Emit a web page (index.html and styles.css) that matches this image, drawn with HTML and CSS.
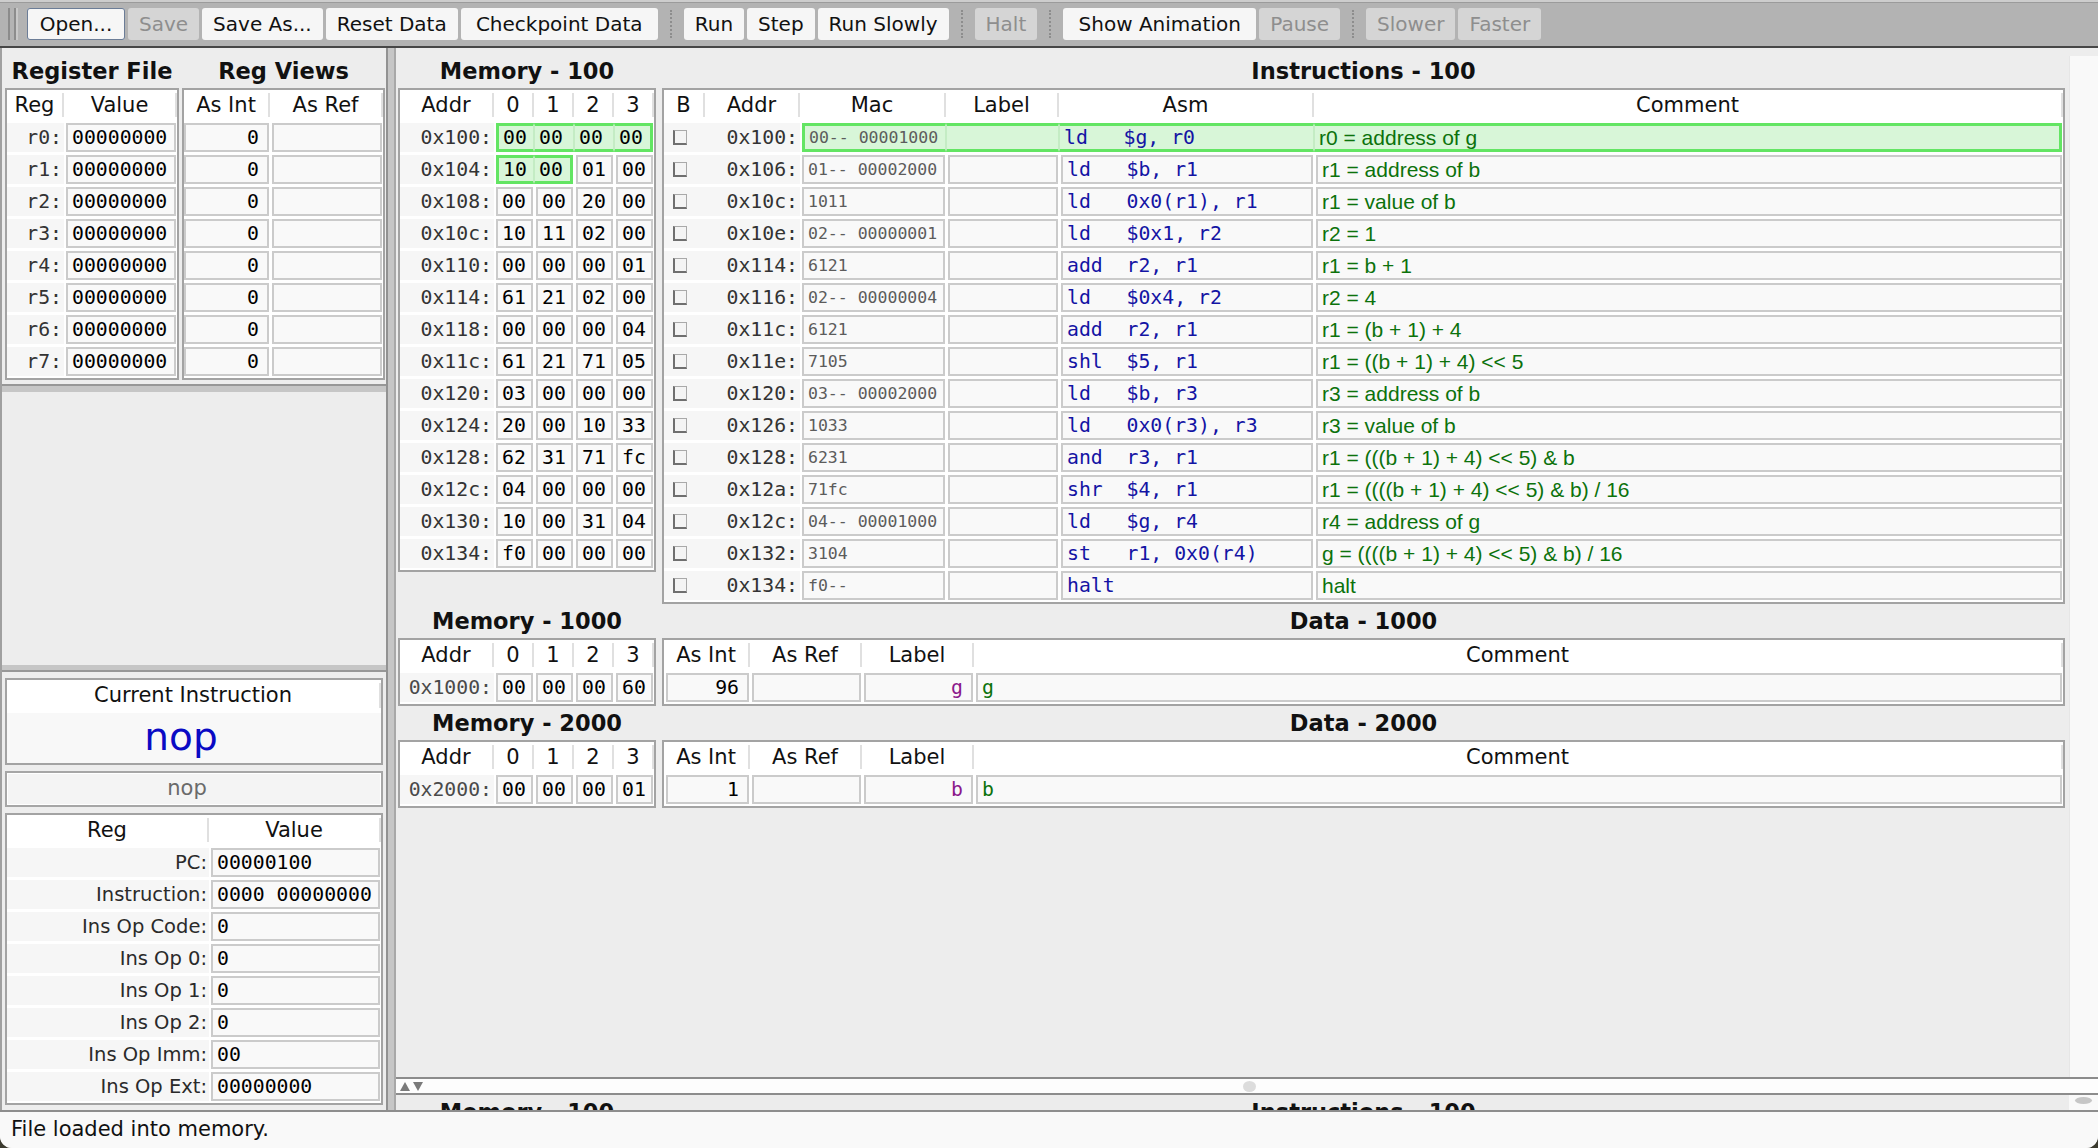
FILE: index.html
```html
<!DOCTYPE html>
<html>
<head>
<meta charset="utf-8">
<title>Simple Machine</title>
<link rel="stylesheet" href="styles.css">
</head>
<body>
<div class="app">
  <div class="toolbar">
    <span class="grip"></span>
    <button class="btn focus w-open">Open...</button>
    <button class="btn off">Save</button>
    <button class="btn">Save As...</button>
    <button class="btn">Reset Data</button>
    <button class="btn w-ckpt">Checkpoint Data</button>
    <span class="sep"></span>
    <button class="btn">Run</button>
    <button class="btn">Step</button>
    <button class="btn">Run Slowly</button>
    <span class="sep"></span>
    <button class="btn off">Halt</button>
    <span class="sep"></span>
    <button class="btn w-anim">Show Animation</button>
    <button class="btn off">Pause</button>
    <span class="sep"></span>
    <button class="btn off">Slower</button>
    <button class="btn off">Faster</button>
  </div>

  <div class="main">
    <div class="left">
      <div class="pair">
        <div class="regcol">
          <div class="title">Register File</div>
          <div class="tbl">
            <div class="thead g-reg"><div class="th">Reg</div><div class="th">Value</div></div>
            <div class="trow g-reg"><div class="lab">r0:</div><div class="fld">00000000</div></div>
            <div class="trow g-reg"><div class="lab">r1:</div><div class="fld">00000000</div></div>
            <div class="trow g-reg"><div class="lab">r2:</div><div class="fld">00000000</div></div>
            <div class="trow g-reg"><div class="lab">r3:</div><div class="fld">00000000</div></div>
            <div class="trow g-reg"><div class="lab">r4:</div><div class="fld">00000000</div></div>
            <div class="trow g-reg"><div class="lab">r5:</div><div class="fld">00000000</div></div>
            <div class="trow g-reg"><div class="lab">r6:</div><div class="fld">00000000</div></div>
            <div class="trow g-reg"><div class="lab">r7:</div><div class="fld">00000000</div></div>
          </div>
        </div>
        <div class="viewcol">
          <div class="title">Reg Views</div>
          <div class="tbl">
            <div class="thead g-view"><div class="th">As Int</div><div class="th">As Ref</div></div>
            <div class="trow g-view"><div class="fld num first0">0</div><div class="fld"></div></div>
            <div class="trow g-view"><div class="fld num first0">0</div><div class="fld"></div></div>
            <div class="trow g-view"><div class="fld num first0">0</div><div class="fld"></div></div>
            <div class="trow g-view"><div class="fld num first0">0</div><div class="fld"></div></div>
            <div class="trow g-view"><div class="fld num first0">0</div><div class="fld"></div></div>
            <div class="trow g-view"><div class="fld num first0">0</div><div class="fld"></div></div>
            <div class="trow g-view"><div class="fld num first0">0</div><div class="fld"></div></div>
            <div class="trow g-view"><div class="fld num first0">0</div><div class="fld"></div></div>
          </div>
        </div>
      </div>
      <div class="hdiv hdiv-a"></div>
      <div class="empty"></div>
      <div class="hdiv hdiv-b"></div>
      <div class="lbottom">
        <div class="tbl cur">
          <div class="thead g-one"><div class="th">Current Instruction</div></div>
          <div class="curbody">nop</div>
        </div>
        <div class="graybox"><div class="grayin">nop</div></div>
        <div class="tbl">
          <div class="thead g-cpu"><div class="th">Reg</div><div class="th">Value</div></div>
          <div class="trow g-cpu"><div class="lab sans">PC:</div><div class="fld">00000100</div></div>
          <div class="trow g-cpu"><div class="lab sans">Instruction:</div><div class="fld">0000 00000000</div></div>
          <div class="trow g-cpu"><div class="lab sans">Ins Op Code:</div><div class="fld">0</div></div>
          <div class="trow g-cpu"><div class="lab sans">Ins Op 0:</div><div class="fld">0</div></div>
          <div class="trow g-cpu"><div class="lab sans">Ins Op 1:</div><div class="fld">0</div></div>
          <div class="trow g-cpu"><div class="lab sans">Ins Op 2:</div><div class="fld">0</div></div>
          <div class="trow g-cpu"><div class="lab sans">Ins Op Imm:</div><div class="fld">00</div></div>
          <div class="trow g-cpu"><div class="lab sans">Ins Op Ext:</div><div class="fld">00000000</div></div>
        </div>
      </div>
    </div>

    <div class="vdiv"></div>

    <div class="right">
      <div class="upper">
        <div class="scroll">
          <div class="section">
            <div>
              <div class="title">Memory - 100</div>
              <div class="tbl">
                <div class="thead g-mem"><div class="th">Addr</div><div class="th">0</div><div class="th">1</div><div class="th">2</div><div class="th">3</div></div>
                <div class="trow g-mem"><div class="lab">0x100:</div><div class="fld hl hl-first">00</div><div class="fld hl">00</div><div class="fld hl">00</div><div class="fld hl hl-last">00</div></div>
                <div class="trow g-mem"><div class="lab">0x104:</div><div class="fld hl hl-first">10</div><div class="fld hl hl-last">00</div><div class="fld">01</div><div class="fld">00</div></div>
                <div class="trow g-mem"><div class="lab">0x108:</div><div class="fld">00</div><div class="fld">00</div><div class="fld">20</div><div class="fld">00</div></div>
                <div class="trow g-mem"><div class="lab">0x10c:</div><div class="fld">10</div><div class="fld">11</div><div class="fld">02</div><div class="fld">00</div></div>
                <div class="trow g-mem"><div class="lab">0x110:</div><div class="fld">00</div><div class="fld">00</div><div class="fld">00</div><div class="fld">01</div></div>
                <div class="trow g-mem"><div class="lab">0x114:</div><div class="fld">61</div><div class="fld">21</div><div class="fld">02</div><div class="fld">00</div></div>
                <div class="trow g-mem"><div class="lab">0x118:</div><div class="fld">00</div><div class="fld">00</div><div class="fld">00</div><div class="fld">04</div></div>
                <div class="trow g-mem"><div class="lab">0x11c:</div><div class="fld">61</div><div class="fld">21</div><div class="fld">71</div><div class="fld">05</div></div>
                <div class="trow g-mem"><div class="lab">0x120:</div><div class="fld">03</div><div class="fld">00</div><div class="fld">00</div><div class="fld">00</div></div>
                <div class="trow g-mem"><div class="lab">0x124:</div><div class="fld">20</div><div class="fld">00</div><div class="fld">10</div><div class="fld">33</div></div>
                <div class="trow g-mem"><div class="lab">0x128:</div><div class="fld">62</div><div class="fld">31</div><div class="fld">71</div><div class="fld">fc</div></div>
                <div class="trow g-mem"><div class="lab">0x12c:</div><div class="fld">04</div><div class="fld">00</div><div class="fld">00</div><div class="fld">00</div></div>
                <div class="trow g-mem"><div class="lab">0x130:</div><div class="fld">10</div><div class="fld">00</div><div class="fld">31</div><div class="fld">04</div></div>
                <div class="trow g-mem"><div class="lab">0x134:</div><div class="fld">f0</div><div class="fld">00</div><div class="fld">00</div><div class="fld">00</div></div>
              </div>
            </div>
            <div>
              <div class="title">Instructions - 100</div>
              <div class="tbl">
                <div class="thead g-ins"><div class="th">B</div><div class="th">Addr</div><div class="th">Mac</div><div class="th">Label</div><div class="th">Asm</div><div class="th">Comment</div></div>
                <div class="trow g-ins"><div class="lab cbc"><span class="cb"></span></div><div class="lab">0x100:</div><div class="fld mac hl hl-first">00-- 00001000</div><div class="fld hl"></div><div class="fld asm hl">ld   $g, r0</div><div class="fld cm hl hl-last">r0 = address of g</div></div>
                <div class="trow g-ins"><div class="lab cbc"><span class="cb"></span></div><div class="lab">0x106:</div><div class="fld mac">01-- 00002000</div><div class="fld"></div><div class="fld asm">ld   $b, r1</div><div class="fld cm">r1 = address of b</div></div>
                <div class="trow g-ins"><div class="lab cbc"><span class="cb"></span></div><div class="lab">0x10c:</div><div class="fld mac">1011</div><div class="fld"></div><div class="fld asm">ld   0x0(r1), r1</div><div class="fld cm">r1 = value of b</div></div>
                <div class="trow g-ins"><div class="lab cbc"><span class="cb"></span></div><div class="lab">0x10e:</div><div class="fld mac">02-- 00000001</div><div class="fld"></div><div class="fld asm">ld   $0x1, r2</div><div class="fld cm">r2 = 1</div></div>
                <div class="trow g-ins"><div class="lab cbc"><span class="cb"></span></div><div class="lab">0x114:</div><div class="fld mac">6121</div><div class="fld"></div><div class="fld asm">add  r2, r1</div><div class="fld cm">r1 = b + 1</div></div>
                <div class="trow g-ins"><div class="lab cbc"><span class="cb"></span></div><div class="lab">0x116:</div><div class="fld mac">02-- 00000004</div><div class="fld"></div><div class="fld asm">ld   $0x4, r2</div><div class="fld cm">r2 = 4</div></div>
                <div class="trow g-ins"><div class="lab cbc"><span class="cb"></span></div><div class="lab">0x11c:</div><div class="fld mac">6121</div><div class="fld"></div><div class="fld asm">add  r2, r1</div><div class="fld cm">r1 = (b + 1) + 4</div></div>
                <div class="trow g-ins"><div class="lab cbc"><span class="cb"></span></div><div class="lab">0x11e:</div><div class="fld mac">7105</div><div class="fld"></div><div class="fld asm">shl  $5, r1</div><div class="fld cm">r1 = ((b + 1) + 4) &lt;&lt; 5</div></div>
                <div class="trow g-ins"><div class="lab cbc"><span class="cb"></span></div><div class="lab">0x120:</div><div class="fld mac">03-- 00002000</div><div class="fld"></div><div class="fld asm">ld   $b, r3</div><div class="fld cm">r3 = address of b</div></div>
                <div class="trow g-ins"><div class="lab cbc"><span class="cb"></span></div><div class="lab">0x126:</div><div class="fld mac">1033</div><div class="fld"></div><div class="fld asm">ld   0x0(r3), r3</div><div class="fld cm">r3 = value of b</div></div>
                <div class="trow g-ins"><div class="lab cbc"><span class="cb"></span></div><div class="lab">0x128:</div><div class="fld mac">6231</div><div class="fld"></div><div class="fld asm">and  r3, r1</div><div class="fld cm">r1 = (((b + 1) + 4) &lt;&lt; 5) &amp; b</div></div>
                <div class="trow g-ins"><div class="lab cbc"><span class="cb"></span></div><div class="lab">0x12a:</div><div class="fld mac">71fc</div><div class="fld"></div><div class="fld asm">shr  $4, r1</div><div class="fld cm">r1 = ((((b + 1) + 4) &lt;&lt; 5) &amp; b) / 16</div></div>
                <div class="trow g-ins"><div class="lab cbc"><span class="cb"></span></div><div class="lab">0x12c:</div><div class="fld mac">04-- 00001000</div><div class="fld"></div><div class="fld asm">ld   $g, r4</div><div class="fld cm">r4 = address of g</div></div>
                <div class="trow g-ins"><div class="lab cbc"><span class="cb"></span></div><div class="lab">0x132:</div><div class="fld mac">3104</div><div class="fld"></div><div class="fld asm">st   r1, 0x0(r4)</div><div class="fld cm">g = ((((b + 1) + 4) &lt;&lt; 5) &amp; b) / 16</div></div>
                <div class="trow g-ins"><div class="lab cbc"><span class="cb"></span></div><div class="lab">0x134:</div><div class="fld mac">f0--</div><div class="fld"></div><div class="fld asm">halt</div><div class="fld cm">halt</div></div>
              </div>
            </div>
          </div>

          <div class="section">
            <div>
              <div class="title">Memory - 1000</div>
              <div class="tbl">
                <div class="thead g-mem"><div class="th">Addr</div><div class="th">0</div><div class="th">1</div><div class="th">2</div><div class="th">3</div></div>
                <div class="trow g-mem"><div class="lab gray">0x1000:</div><div class="fld">00</div><div class="fld">00</div><div class="fld">00</div><div class="fld">60</div></div>
              </div>
            </div>
            <div>
              <div class="title">Data - 1000</div>
              <div class="tbl">
                <div class="thead g-dat"><div class="th">As Int</div><div class="th">As Ref</div><div class="th">Label</div><div class="th">Comment</div></div>
                <div class="trow g-dat"><div class="fld num">96</div><div class="fld"></div><div class="fld num lbl">g</div><div class="fld dcm">g</div></div>
              </div>
            </div>
          </div>

          <div class="section">
            <div>
              <div class="title">Memory - 2000</div>
              <div class="tbl">
                <div class="thead g-mem"><div class="th">Addr</div><div class="th">0</div><div class="th">1</div><div class="th">2</div><div class="th">3</div></div>
                <div class="trow g-mem"><div class="lab gray">0x2000:</div><div class="fld">00</div><div class="fld">00</div><div class="fld">00</div><div class="fld">01</div></div>
              </div>
            </div>
            <div>
              <div class="title">Data - 2000</div>
              <div class="tbl">
                <div class="thead g-dat"><div class="th">As Int</div><div class="th">As Ref</div><div class="th">Label</div><div class="th">Comment</div></div>
                <div class="trow g-dat"><div class="fld num">1</div><div class="fld"></div><div class="fld num lbl">b</div><div class="fld dcm">b</div></div>
              </div>
            </div>
          </div>
        </div>
        <div class="vtrack"></div>
      </div>

      <div class="splitbar">
        <span class="arrows"><span class="tri-up"></span><span class="tri-down"></span></span>
        <span class="knob"></span>
        <span></span>
      </div>

      <div class="lower">
        <div class="scroll2">
          <div class="section peek">
            <div class="title">Memory - 100</div>
            <div class="title">Instructions - 100</div>
          </div>
        </div>
        <div class="vtrack2"><span class="oval"></span></div>
      </div>
    </div>
  </div>

  <div class="status">File loaded into memory.</div>
</div>
</body>
</html>
```

FILE: styles.css
```css
* { box-sizing: border-box; margin: 0; padding: 0; }
html, body { width: 2098px; height: 1148px; overflow: hidden; }
body {
  background: #3b3a2e;
  font-family: "DejaVu Sans", sans-serif;
  font-size: 20px;
  color: #111;
}
.app {
  width: 2098px;
  height: 1148px;
  display: flex;
  flex-direction: column;
  background: #ededed;
  border-radius: 0 0 12px 12px;
  overflow: hidden;
}

/* toolbar */
.toolbar {
  height: 48px;
  flex: none;
  display: flex;
  align-items: flex-start;
  padding: 8px 0 0 8px;
  background: linear-gradient(#cdcdcd 0 2px, #9b9b9b 2px 3px, #b3b3b3 3px);
  border-bottom: 2px solid #474747;
}
.grip {
  width: 8px;
  height: 32px;
  margin: 0 11px 0 0;
  border-left: 2px solid #8c8c8c;
  border-right: 2px solid #8c8c8c;
  box-shadow: 2px 0 0 #c8c8c8;
}
.btn {
  height: 32px;
  padding: 0 11px;
  margin-right: 3px;
  font-family: "DejaVu Sans", sans-serif;
  font-size: 20px;
  line-height: 32px;
  background: #f6f6f6;
  color: #111;
  border: 0;
  border-radius: 3px;
  white-space: nowrap;
}
.btn.focus { box-shadow: inset 0 0 0 1px #6c7d97; }
.btn.off { background: #d5d5d5; color: #8e8e8e; }
.w-open { width: 98px; }
.w-ckpt { width: 197px; }
.w-anim { width: 193px; }
.sep {
  width: 0;
  height: 28px;
  margin: 2px 12px 0 9px;
  border-left: 2px dotted #8d8d8d;
}

/* main */
.main { flex: 1; display: flex; min-height: 0; }
.left {
  width: 386px;
  flex: none;
  display: flex;
  flex-direction: column;
  border-left: 2px solid #a0a0a0;
}
.pair { display: flex; gap: 3px; padding: 6px 0 0 3px; }
.regcol { width: 174px; }
.viewcol { width: 203px; }
.title {
  height: 34px;
  line-height: 34px;
  text-align: center;
  font-weight: bold;
  font-size: 22.5px;
  white-space: nowrap;
  color: #111;
}

.tbl { background: #fff; border: 2px solid #a3a3a3; }
.thead, .trow { display: grid; }
.thead { height: 32px; }
.trow { height: 32px; }
.th {
  margin: 3px 0 5px;
  line-height: 24px;
  text-align: center;
  border-right: 2px solid #e0e0e0;
  font-size: 21px;
  white-space: nowrap;
  overflow: hidden;
  color: #111;
}
.lab {
  margin: 1px 0 2px;
  background: #f6f6f6;
  text-align: right;
  padding-right: 2px;
  line-height: 29px;
  font-family: "DejaVu Sans Mono", monospace;
  font-size: 19.8px;
  color: #333;
  white-space: pre;
}
.lab.sans { font-family: "DejaVu Sans", sans-serif; font-size: 19.5px; color: #2a2a2a; }
.lab.gray { color: #4a4a4a; }
.fld {
  margin: 1px 1px 2px 2px;
  border: 2px solid #cbcbcb;
  background: #f9f9f9;
  line-height: 25px;
  padding: 0 4px;
  font-family: "DejaVu Sans Mono", monospace;
  font-size: 19.8px;
  white-space: pre;
  overflow: hidden;
  color: #000;
}
.fld.first0 { margin-left: 0; }
.num { text-align: right; padding-right: 8px; }
.mac { font-size: 16.5px; color: #5c5c5c; }
.asm { color: #1414a4; }
.cm { font-family: "Liberation Sans", sans-serif; font-size: 21px; color: #0c720c; }
.lbl { color: #8b198b; }
.dcm { color: #0c720c; }

.hl {
  border-width: 3px 1px;
  border-color: #63e563 #c4ecc4;
  background: #d8f6d8;
  line-height: 23px;
  margin-left: 0;
  margin-right: 0;
}
.hl-first { border-left: 3px solid #63e563; margin-left: 2px; }
.hl-last { border-right: 3px solid #63e563; margin-right: 1px; }

.cbc { display: flex; align-items: center; padding-left: 9px; }
.cb {
  width: 14px;
  height: 15px;
  border: 1px solid #a9a9a9;
  border-left: 2px solid #6f6f6f;
  border-bottom: 2px solid #6f6f6f;
  background: #f4f4f4;
}

.g-reg { grid-template-columns: 57px 1fr; }
.g-view { grid-template-columns: 86px 1fr; }
.g-mem { grid-template-columns: 94px repeat(4, 40px); }
.g-ins { grid-template-columns: 41px 95px 146px 113px 255px 1fr; }
.g-dat { grid-template-columns: 86px 112px 112px 1fr; }
.g-cpu { grid-template-columns: 202px 1fr; }
.g-one { grid-template-columns: 1fr; height: 33px; }

.hdiv { flex: none; background: #c6c6c6; }
.hdiv-a { height: 8px; margin-top: 4px; border-top: 2px solid #979797; }
.hdiv-b { height: 7px; border-bottom: 2px solid #979797; }
.empty { flex: 1; }

.lbottom {
  flex: none;
  display: flex;
  flex-direction: column;
  gap: 6px;
  padding: 6px 3px 5px 3px;
}
.cur .th { font-size: 21px; }
.curbody {
  height: 50px;
  line-height: 48px;
  background: #f8f8f8;
  text-align: center;
  padding-right: 26px;
  font-size: 39px;
  color: #0a0ac4;
}
.graybox {
  height: 36px;
  border: 2px solid #a6a6a6;
  padding: 1px;
  background: #fff;
}
.grayin {
  height: 30px;
  line-height: 29px;
  background: #f4f4f4;
  text-align: center;
  padding-right: 14px;
  font-size: 21px;
  color: #6a6a6a;
}

.vdiv {
  width: 10px;
  flex: none;
  background: #c6c6c6;
  border-left: 2px solid #929292;
  border-right: 2px solid #a8a8a8;
}

.right { flex: 1; display: flex; flex-direction: column; min-width: 0; }
.upper { flex: 1; display: flex; min-height: 0; }
.scroll { flex: 1; padding: 6px 0 0 2px; overflow: hidden; }
.vtrack {
  width: 29px;
  flex: none;
  margin-top: 8px;
  background: #f9f9f9;
  border-left: 1px solid #e6e6e6;
}
.section {
  display: grid;
  grid-template-columns: 258px 1403px;
  column-gap: 6px;
  align-items: start;
}

.splitbar {
  height: 18px;
  flex: none;
  display: grid;
  grid-template-columns: 1fr auto 1fr;
  align-items: center;
  border-top: 2px solid #8c8c8c;
  border-bottom: 2px solid #8c8c8c;
  background: #fdfdfd;
  padding-left: 4px;
}
.arrows { display: flex; gap: 3px; align-items: center; }
.tri-up {
  width: 0; height: 0;
  border-left: 5px solid transparent;
  border-right: 5px solid transparent;
  border-bottom: 9px solid #7a7a7a;
}
.tri-down {
  width: 0; height: 0;
  border-left: 5px solid transparent;
  border-right: 5px solid transparent;
  border-top: 9px solid #7a7a7a;
}
.knob {
  width: 13px;
  height: 11px;
  border-radius: 50%;
  background: #dcdcdc;
}

.lower { height: 15px; flex: none; display: flex; overflow: hidden; background: #ececec; }
.scroll2 { flex: 1; padding-left: 2px; overflow: hidden; }
.peek { margin-top: 0; }
.vtrack2 {
  width: 29px;
  flex: none;
  background: #f9f9f9;
  display: flex;
  justify-content: center;
  padding-top: 2px;
}
.oval { width: 17px; height: 7px; border-radius: 50%; background: #c6c6c6; }

.status {
  height: 38px;
  flex: none;
  border-top: 2px solid #8e8e8e;
  background: #f9f9f9;
  padding-left: 11px;
  line-height: 35px;
  font-size: 21px;
  color: #111;
}
```
